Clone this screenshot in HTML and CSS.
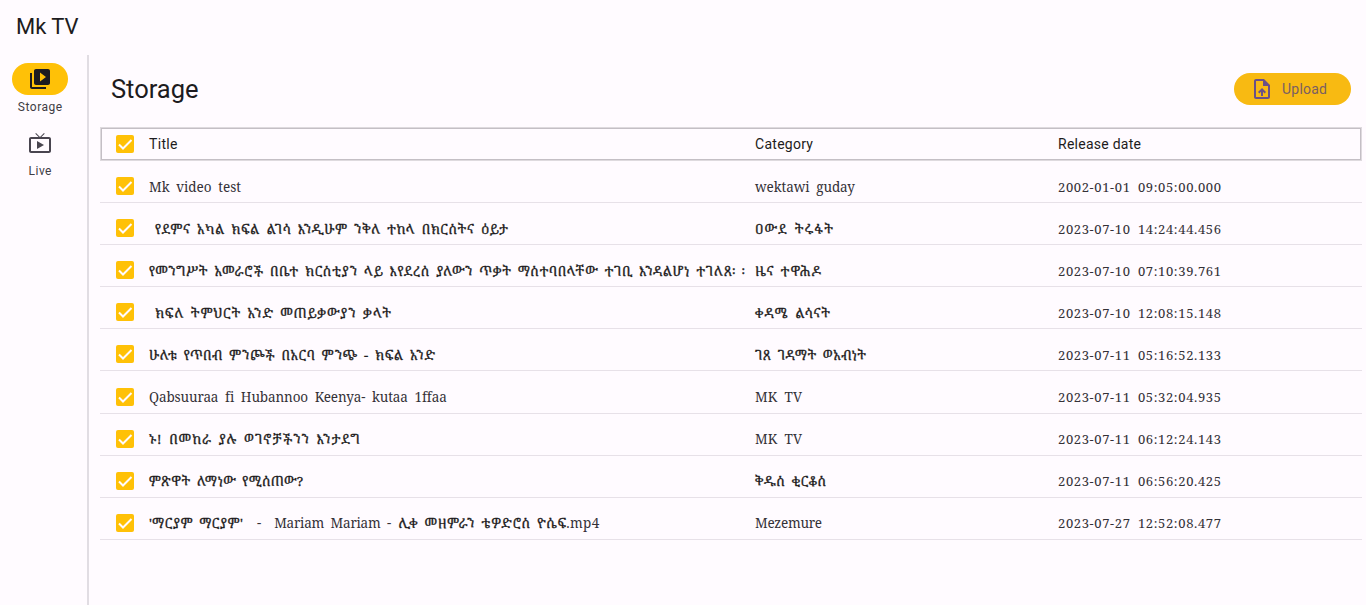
FILE: index.html
```html
<!DOCTYPE html>
<html lang="am">
<head>
<meta charset="utf-8">
<title>Mk TV</title>
<link rel="stylesheet" href="styles.css">
</head>
<body>
<header class="appbar"><span data-w="62.500">Mk TV</span></header>
<div class="shell">
  <nav class="rail">
    <a class="dest active">
      <span class="pill"><svg width="24" height="24" viewBox="0 0 24 24"><path d="M4 6H2v14c0 1.100.9 2 2 2h14v-2H4V6zm16-4H8c-1.100 0-2 .9-2 2v12c0 1.100.9 2 2 2h12c1.100 0 2-.9 2-2V4c0-1.100-.9-2-2-2zm-8 12.500v-9l6 4.500-6 4.500z"/></svg></span>
      <span class="label" data-w="44.500">Storage</span>
    </a>
    <a class="dest">
      <span class="pill"><svg width="24" height="24" viewBox="0 0 24 24"><path d="M9 10v8l7-4zm12-4h-7.600l3.300-3.300-.7-.7-4 4-4-4-.7.7L10.600 6H3c-1.100 0-2 .9-2 2v12c0 1.100.9 2 2 2h18c1.100 0 2-.9 2-2V8c0-1.100-.9-2-2-2zm0 14H3V8h18v12z"/></svg></span>
      <span class="label" data-w="23">Live</span>
    </a>
  </nav>
  <main class="content">
    <div class="heading">
      <h1><span data-w="87.500">Storage</span></h1>
      <button class="upload"><svg width="24" height="24" viewBox="0 0 24 24"><path d="M14 2H6c-1.100 0-1.990.9-1.990 2L4 20c0 1.100.89 2 1.990 2H18c1.100 0 2-.9 2-2V8l-6-6zm4 18H6V4h7v5h5v11zM8 15.010l1.410 1.410L11 14.840V19h2v-4.160l1.590 1.590L16 15.010 12.010 11z"/></svg><span data-w="45">Upload</span></button>
    </div>
    <div class="table" id="table">
      <div class="row head">
        <span class="check"><svg viewBox="0 0 18 18"><path d="M3 9.500l4 4 8.500-8.500"/></svg></span>
        <span class="cell"><span data-w="28.500">Title</span></span>
        <span class="cell"><span data-w="58">Category</span></span>
        <span class="cell"><span data-w="83">Release date</span></span>
      </div>
    </div>
  </main>
</div>
<script src="table.js"></script>
</body>
</html>
```
FILE: styles.css
```css
* { box-sizing: border-box; }
body { margin: 0; height: 605px; overflow: hidden; display: flex; flex-direction: column; background: #fffbff; color: #1d1b20; font-family: Roboto, sans-serif; }
.appbar { height: 55px; flex: none; padding: 0 16px; font-size: 22px; line-height: 53px; }
.shell { flex: 1; display: flex; min-height: 0; }
.rail { width: 89px; flex: none; border-right: 2px solid #e1dde3; padding: 8px 9px 0 2px; display: flex; flex-direction: column; align-items: center; gap: 4px; }
.dest { height: 60px; width: 76px; display: flex; flex-direction: column; align-items: center; color: #49454f; }
.pill { width: 56px; height: 32px; border-radius: 16px; display: flex; align-items: center; justify-content: center; }
.active .pill { background: #ffc107; color: #1d1b20; }
.label { font-size: 12px; line-height: 16px; margin-top: 4px; color: #403d45; }
svg { fill: currentColor; display: block; flex: none; }
[data-w] { white-space: pre; }
.content { flex: 1; padding: 18px 4px 0 11px; min-width: 0; }
.heading { height: 54px; padding: 0 11px; display: flex; justify-content: space-between; align-items: flex-start; }
h1 { margin: 0; font-size: 25.500px; font-weight: 400; line-height: 32px; }
.upload { border: 0; width: 117px; height: 32px; border-radius: 16px; background: #f8ba12; color: #7a5f62; font: 14px/32px Roboto, sans-serif; display: flex; align-items: center; gap: 8px; padding: 0 16px; }
.upload svg { color: #6b5088; }
.row { display: grid; grid-template-columns: 18px 606px 303px 1fr; height: 42.100px; padding: 9px 0 0 16px; align-items: center; border-bottom: 1px solid #e7e1e8; }
.row .cell { padding-left: 15px; }
.row .cell:nth-child(2) { margin-right: -15px; }
.head { height: 34px; border: 1px solid #dedade; padding: 0 0 0 15px; font-size: 14px; box-shadow: inset 0 0 0 1px #c4bfc5; }
.check { width: 18px; height: 18px; border-radius: 2px; background: #ffc107; }
.check svg { width: 18px; height: 18px; fill: none; stroke: #fffbff; stroke-width: 2; }
.cell { white-space: pre; display: flex; align-items: baseline; line-height: 20px; }
.body .cell { font-family: "Noto Serif", "Noto Serif Ethiopic", "Liberation Serif", serif; font-size: 13px; padding-top: 1px; color: #343137; }
.latin { font-size: 13.500px; }
.date { font-size: 13px; }
.ethiopic { font-size: 13.300px; color: #1d1b20; -webkit-text-stroke: .3px #1d1b20; }
```
FILE: table.js
```js
// Each cell is a list of text runs: [text, width, gap before].
const rows = [
  [[["Mk video test", 92]], [["wektawi guday", 100]], "2002-01-01 09:05:00.000"],
  [[["የደምና አካል ክፍል ልገሳ እንዲሁም ንቅለ ተከላ በክርስትና ዕይታ", 353, 6]], [["ዐውደ ትሩፋት", 78]], "2023-07-10 14:24:44.456"],
  [[["የመንግሥት አመራሮች በቤተ ክርስቲያን ላይ እየደረሰ ያለውን ጥቃት ማስተባበላቸው ተገቢ እንዳልሆነ ተገለጸ", 583], ["፡፡", 13, 0]], [["ዜና ተዋሕዶ", 66]], "2023-07-10 07:10:39.761"],
  [[["ክፍለ ትምህርት አንድ መጠይቃውያን ቃላት", 236, 6]], [["ቀዳሜ ልሳናት", 75]], "2023-07-10 12:08:15.148"],
  [[["ሁለቱ የጥበብ ምንጮች በአርባ ምንጭ - ክፍል አንድ", 286]], [["ገጸ ገዳማት ወአብነት", 111]], "2023-07-11 05:16:52.133"],
  [[["Qabsuuraa fi Hubannoo Keenya- kutaa 1ffaa", 297]], [["MK TV", 47]], "2023-07-11 05:32:04.935"],
  [[["ኑ! በመከራ ያሉ ወገኖቻችንን እንታደግ", 211]], [["MK TV", 47]], "2023-07-11 06:12:24.143"],
  [[["ምጽዋት ለማነው የሚሰጠው?", 154]], [["ቅዱስ ቂርቆስ", 71]], "2023-07-11 06:56:20.425"],
  [[["'ማርያም ማርያም'", 94], ["-", 5, 14], ["Mariam Mariam -", 117, 13], ["ሊቀ መዘምራን ቴዎድሮስ ዮሴፍ", 168, 7], [".mp4", 33]], [["Mezemure", 67]], "2023-07-27 12:52:08.477"]
];
const check = document.querySelector(".check").outerHTML;
const kind = t => /[\u1200-\u137f]/.test(t) ? "ethiopic" : /^\d{4}-/.test(t) ? "date" : "latin";
const runs = list => list.map(([t, w, gap = 0]) => `<span class="${kind(t)}" data-w="${w}" style="margin-left:${gap}px">${t}</span>`).join("");
const body = document.createElement("div");
body.className = "body";
body.innerHTML = rows.map(([title, category, date]) =>
  `<div class="row">${check}<span class="cell">${runs(title)}</span><span class="cell">${runs(category)}</span><span class="cell">${runs([[date, 163]])}</span></div>`).join("");
document.getElementById("table").append(body);

for (const el of document.querySelectorAll("[data-w]")) {
  const text = el.textContent;
  if (body.contains(el)) el.style.wordSpacing = el.className === "ethiopic" ? "2.700px" : "3.300px";
  const extra = (el.dataset.w - el.getBoundingClientRect().width) / Math.max(1, text.length - 1);
  el.style.letterSpacing = extra + "px";
  el.style.marginRight = -extra + "px";
}
```
